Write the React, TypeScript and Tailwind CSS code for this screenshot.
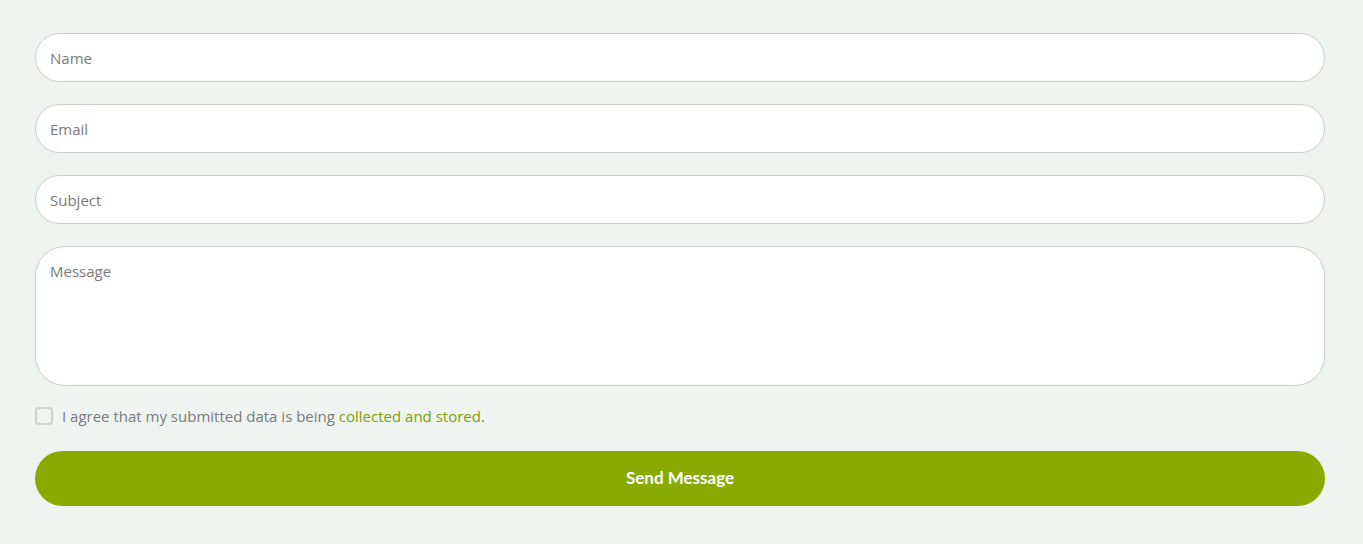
export default function App() {
  const fields = ["Name", "Email", "Subject"];

  return (
    <main
      className="min-h-screen bg-[#f0f4f1] pl-[35px] pr-[38px] pt-[33px] pb-[38px]"
      style={{ fontFamily: '"Open Sans", "Liberation Sans", sans-serif' }}
    >
      <form className="flex flex-col">
        {fields.map((f) => (
          <input
            key={f}
            type="text"
            placeholder={f}
            className="mb-[22px] h-[49px] w-full rounded-full border border-[#c9cccb] bg-white px-[14px] text-[15px] text-[#555] placeholder:text-[#7a7a7a] outline-none"
          />
        ))}
        <textarea
          placeholder="Message"
          className="h-[140px] w-full resize-none rounded-[30px] border border-[#c9cccb] bg-white px-[14px] pt-[13px] text-[15px] text-[#555] placeholder:text-[#7a7a7a] outline-none"
        />

        <label className="mt-[19px] flex items-center gap-[9px] text-[15px] text-[#7a7a7a]">
          <span className="h-[18px] w-[18px] rounded-[4px] border-2 border-[#cfd3d1] bg-[#f0f4f1]" />
          <span>
            I agree that my submitted data is being{" "}
            <a className="text-[#7f9f00]">collected and stored</a>.
          </span>
        </label>

        <button
          type="button"
          className="mt-[23px] h-[55px] w-full rounded-full bg-[#8aaa00] text-[17px] font-bold text-white"
          style={{ fontFamily: '"Lato", "Liberation Sans", sans-serif' }}
        >
          Send Message
        </button>
      </form>
    </main>
  );
}
